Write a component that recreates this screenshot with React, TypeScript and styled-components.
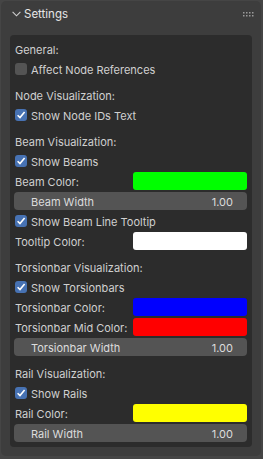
import React from "react";
import styled, { createGlobalStyle } from "styled-components";

const GlobalStyle = createGlobalStyle`
  html, body {
    margin: 0;
    padding: 0;
    background: #454545;
  }
  body {
    font-family: "Inter", "Noto Sans", sans-serif;
    font-size: 11px;
    color: #d0d0d0;
    -webkit-font-smoothing: antialiased;
  }
`;

const Page = styled.div`
  width: 263px;
  height: 459px;
  padding: 1px 2px 3px 1px;
  box-sizing: border-box;
`;

const Panel = styled.section`
  width: 260px;
  height: 455px;
  box-sizing: border-box;
  background: #3d3d3d;
  border-radius: 5px;
  padding: 0 9px 9px 9px;
  display: flex;
  flex-direction: column;
`;

const Header = styled.header`
  height: 26px;
  display: flex;
  align-items: center;
  margin: 0 -9px 8px -9px;
  color: #e6e6e6;
  font-size: 11.5px;
`;

const Title = styled.span`
  margin-left: 3px;
  flex: 1;
`;

const Box = styled.div`
  flex: 1;
  background: #2c2c2c;
  border-radius: 4px;
  padding: 5px 5px 5px 4px;
  display: flex;
  flex-direction: column;
  gap: 2px;
`;

const Section = styled.div`
  display: flex;
  flex-direction: column;
  gap: 2px;
  & + & {
    margin-top: 6px;
  }
`;

const Row = styled.div`
  height: 18px;
  display: flex;
  align-items: center;
`;

const Text = styled.span<{ $w?: number }>`
  display: block;
  line-height: 16px;
  margin-top: 2px;
  white-space: nowrap;
  ${(p) => (p.$w ? `width: ${p.$w}px;` : "")}
`;

const Label = styled(Text)`
  padding-left: 1px;
`;

const CheckRow = styled.label`
  height: 18px;
  display: flex;
  align-items: center;
  padding-left: 1px;
  gap: 4px;
`;

const Tick = styled.span<{ $on: boolean }>`
  width: 12px;
  height: 12px;
  border-radius: 3px;
  background: ${(p) => (p.$on ? "#4772b3" : "#545454")};
  display: flex;
  align-items: center;
  justify-content: center;
`;

const Swatch = styled.div<{ $color: string }>`
  flex: 1;
  height: 18px;
  border-radius: 3px;
  background: ${(p) => p.$color};
`;

const Slider = styled.div`
  height: 18px;
  border-radius: 4px;
  background: #545454;
  display: flex;
  align-items: center;
  justify-content: space-between;
  padding: 0 14px 0 17px;
  color: #dcdcdc;
`;

const Chevron = () => (
  <svg width="9" height="6" viewBox="0 0 9 6" style={{ marginLeft: 11 }}>
    <path d="M0.6 0.8 L4.5 4.8 L8.4 0.8" fill="none" stroke="#cfcfcf" strokeWidth="1.1" />
  </svg>
);

const Grip = () => (
  <svg width="11" height="5" viewBox="0 0 11 5" style={{ marginRight: 7 }}>
    {[0, 1, 2, 3].map((c) =>
      [0, 1].map((r) => (
        <rect key={`${c}-${r}`} x={c * 3} y={r * 3} width="1.5" height="1.5" fill="#9a9a9a" />
      ))
    )}
  </svg>
);

const Check = ({ on, text }: { on: boolean; text: string }) => (
  <CheckRow>
    <Tick $on={on}>
      {on && (
        <svg width="10" height="10" viewBox="0 0 10 10">
          <path d="M1.6 5.2 L4 7.6 L8.6 2" fill="none" stroke="#fff" strokeWidth="1.6" />
        </svg>
      )}
    </Tick>
    <Text>{text}</Text>
  </CheckRow>
);

const ColorProp = ({ text, color }: { text: string; color: string }) => (
  <Row>
    <Label $w={118}>{text}</Label>
    <Swatch $color={color} />
  </Row>
);

const Width = ({ text }: { text: string }) => (
  <Slider>
    <Text>{text}</Text>
    <Text>1.00</Text>
  </Slider>
);

export default function App() {
  return (
    <Page>
      <GlobalStyle />
      <Panel>
        <Header>
          <Chevron />
          <Title>Settings</Title>
          <Grip />
        </Header>
        <Box>
          <Section>
            <Row><Label>General:</Label></Row>
            <Check on={false} text="Affect Node References" />
          </Section>
          <Section>
            <Row><Label>Node Visualization:</Label></Row>
            <Check on text="Show Node IDs Text" />
          </Section>
          <Section>
            <Row><Label>Beam Visualization:</Label></Row>
            <Check on text="Show Beams" />
            <ColorProp text="Beam Color:" color="#00ff00" />
            <Width text="Beam Width" />
            <Check on text="Show Beam Line Tooltip" />
            <ColorProp text="Tooltip Color:" color="#ffffff" />
          </Section>
          <Section>
            <Row><Label>Torsionbar Visualization:</Label></Row>
            <Check on text="Show Torsionbars" />
            <ColorProp text="Torsionbar Color:" color="#0000ff" />
            <ColorProp text="Torsionbar Mid Color:" color="#ff0000" />
            <Width text="Torsionbar Width" />
          </Section>
          <Section>
            <Row><Label>Rail Visualization:</Label></Row>
            <Check on text="Show Rails" />
            <ColorProp text="Rail Color:" color="#ffff00" />
            <Width text="Rail Width" />
          </Section>
        </Box>
      </Panel>
    </Page>
  );
}
